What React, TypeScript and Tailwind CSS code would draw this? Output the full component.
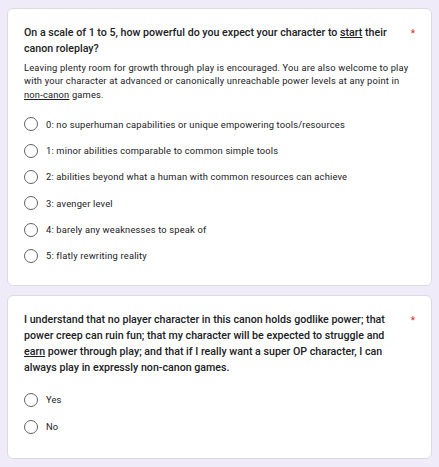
const powerOptions = [
  "0: no superhuman capabilities or unique empowering tools/resources",
  "1: minor abilities comparable to common simple tools",
  "2: abilities beyond what a human with common resources can achieve",
  "3: avenger level",
  "4: barely any weaknesses to speak of",
  "5: flatly rewriting reality",
];

function Radio({ label, tall }: { label: string; tall?: boolean }) {
  return (
    <label className={"flex items-center cursor-pointer " + (tall ? "h-[27.5px]" : "h-[26.4px]")}>
      <span className="w-[14px] h-[14px] rounded-full border-[1.4px] border-[#5f6368] shrink-0" />
      <span className="ml-[8px] text-[9.33px] leading-[13.33px] tracking-[0.18px] text-[#202124]">
        {label}
      </span>
    </label>
  );
}

function Card({ children, last }: { children: React.ReactNode; last?: boolean }) {
  return (
    <div
      className={
        "bg-white border border-[#dadce0] rounded-[6px] px-[16px] pt-[16px] " +
        (last ? "pb-[17px]" : "pb-[16px]")
      }
    >
      {children}
    </div>
  );
}

function Title({ children }: { children: React.ReactNode }) {
  return (
    <div className="flex">
      <div className="flex-1 pr-[20px] text-[10.67px] leading-[16px] font-medium text-[#202124]">
        {children}
      </div>
      <span className="text-[#d93025] text-[10px] leading-[16px] pt-[1px]">*</span>
    </div>
  );
}

export default function App() {
  return (
    <div
      className="min-h-[467px] bg-[#f0ebf8] px-[7px] pt-[8px] flex flex-col gap-[9px]"
      style={{ fontFamily: "Roboto, 'Liberation Sans', sans-serif" }}
    >
      <Card>
        <Title>
          On a scale of 1 to 5, how powerful do you expect your character to{" "}
          <span className="underline">start</span> their canon roleplay?
        </Title>
        <p className="mt-[4px] text-[9.33px] leading-[13.33px] tracking-[0.18px] text-[#202124]">
          Leaving plenty room for growth through play is encouraged. You are also welcome to play
          with your character at advanced or canonically unreachable power levels at any point in{" "}
          <span className="underline">non-canon</span> games.
        </p>
        <div className="mt-[10px] flex flex-col">
          {powerOptions.map((o) => (
            <Radio key={o} label={o} />
          ))}
        </div>
      </Card>

      <Card last>
        <Title>
          I understand that no player character in this canon holds godlike power; that power
          creep can ruin fun; that my character will be expected to struggle and{" "}
          <span className="underline">earn</span> power through play; and that if I really want a
          super OP character, I can always play in expressly non-canon games.
        </Title>
        <div className="mt-[9.5px] flex flex-col">
          <Radio label="Yes" tall />
          <Radio label="No" tall />
        </div>
      </Card>

      <div className="bg-white border border-[#dadce0] rounded-[6px] h-[20px]" />
    </div>
  );
}
